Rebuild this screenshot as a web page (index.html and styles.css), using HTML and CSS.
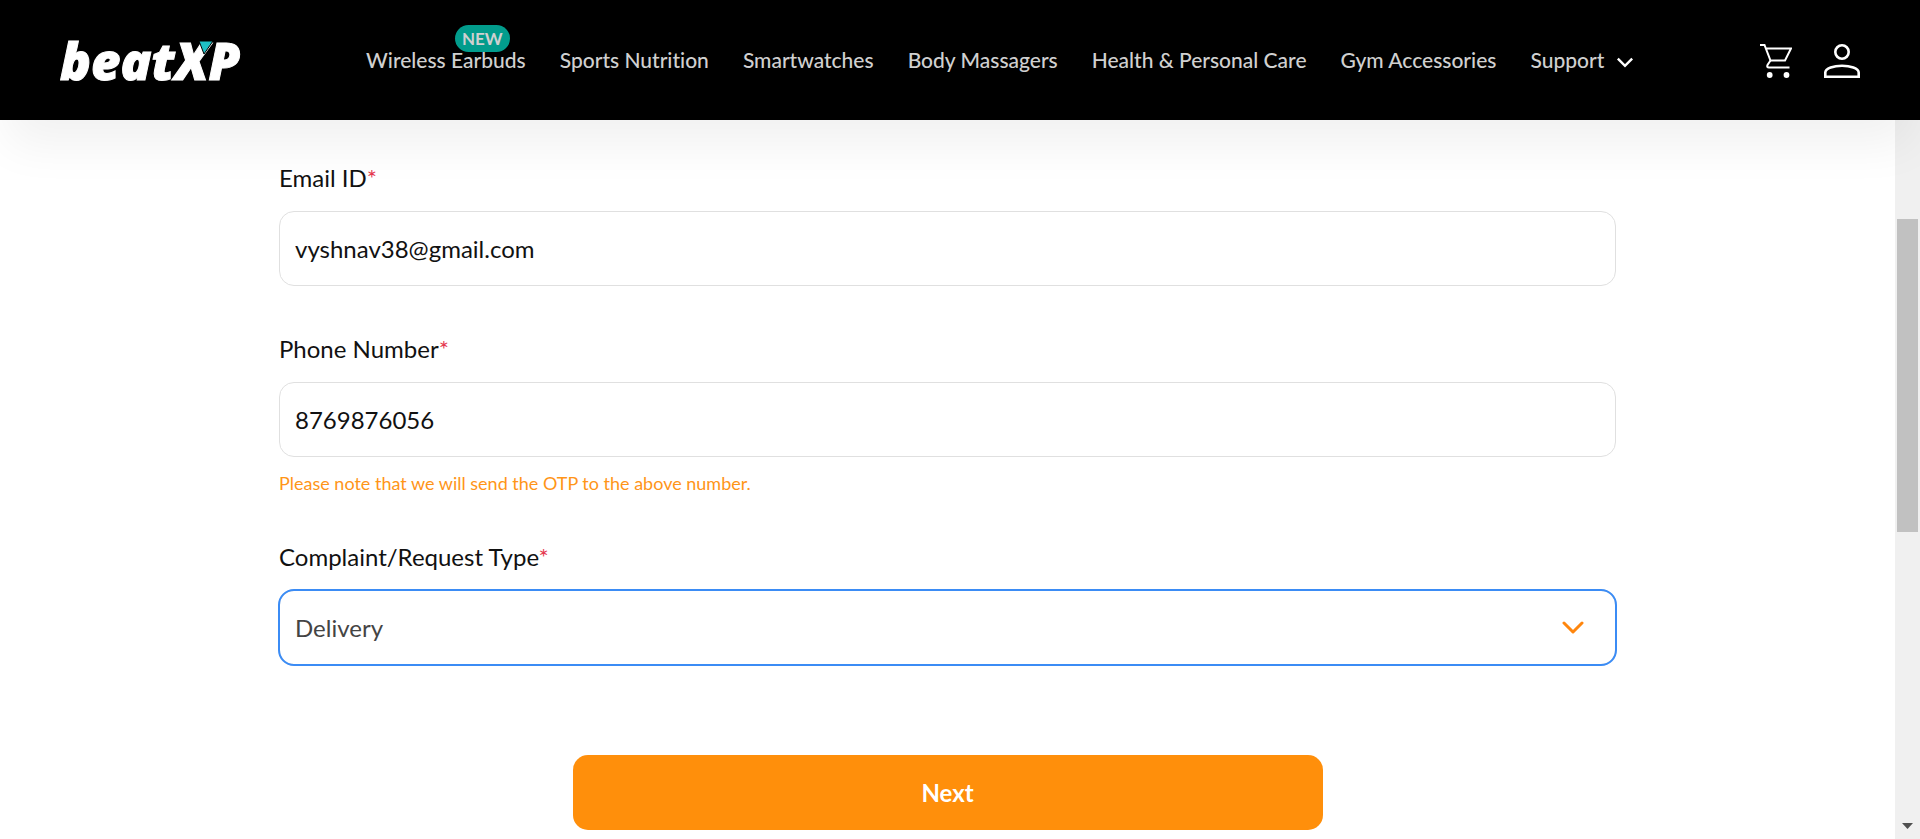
FILE: index.html
```html
<!DOCTYPE html>
<html lang="en">
<head>
<meta charset="utf-8">
<meta name="viewport" content="width=device-width, initial-scale=1">
<title>beatXP Support</title>
<link rel="stylesheet" href="styles.css">
</head>
<body>
<header class="header">
  <a class="logo" href="#" aria-label="beatXP">beatXP<svg class="logo-mark" viewBox="0 0 16 14" aria-hidden="true"><path d="M1 0H15L6 13Z" fill="#1fc0c5" stroke="#000" stroke-width="1"/></svg></a>
  <nav class="nav">
    <a class="nav-link" href="#">Wireless Earbuds<span class="badge">NEW</span></a>
    <a class="nav-link" href="#">Sports Nutrition</a>
    <a class="nav-link" href="#">Smartwatches</a>
    <a class="nav-link" href="#">Body Massagers</a>
    <a class="nav-link" href="#">Health &amp; Personal Care</a>
    <a class="nav-link" href="#">Gym Accessories</a>
    <a class="nav-link" href="#">Support<svg class="nav-chevron" viewBox="0 0 16 10" aria-hidden="true"><path d="M1.500 1.500L8 8L14.500 1.500" fill="none" stroke="#fff" stroke-width="2.200"/></svg></a>
  </nav>
  <div class="actions">
    <a class="action" href="#" aria-label="Cart"><svg class="cart" viewBox="0 0 32 34" aria-hidden="true"><g fill="none" stroke="#fff" stroke-width="2"><path d="M0 1H4.500L10.500 16.500H25L31 4.500H6"/><path d="M10.500 16.500L7.500 21Q6.500 23.500 9 23.500H29.500"/></g><circle cx="9.700" cy="31" r="2.900" fill="#fff"/><circle cx="26.500" cy="31" r="2.900" fill="#fff"/></svg></a>
    <a class="action" href="#" aria-label="Account"><svg class="user" viewBox="0 0 36 34" aria-hidden="true"><g fill="none" stroke="#fff" stroke-width="2.600"><circle cx="18" cy="8" r="6.700"/><path d="M1.300 32.700V28.500C1.300 24 10 21.700 18 21.700S34.700 24 34.700 28.500V32.700Z"/></g></svg></a>
  </div>
</header>
<div class="page">
  <main class="content">
    <form class="form">
      <div class="field">
        <label class="label" for="email">Email ID<span class="required">*</span></label>
        <input class="control" id="email" type="email" value="vyshnav38@gmail.com">
      </div>
      <div class="field">
        <label class="label" for="phone">Phone Number<span class="required">*</span></label>
        <input class="control" id="phone" type="tel" value="8769876056">
        <p class="note">Please note that we will send the OTP to the above number.</p>
      </div>
      <div class="field">
        <label class="label" for="type">Complaint/Request Type<span class="required">*</span></label>
        <div class="select-wrap">
          <select class="control select" id="type"><option>Delivery</option></select>
          <svg class="select-chevron" viewBox="0 0 22 13" aria-hidden="true"><path d="M2 2L11 11L20 2" fill="none" stroke="#ff860d" stroke-width="3" stroke-linecap="round" stroke-linejoin="round"/></svg>
        </div>
      </div>
      <button class="next" type="button">Next</button>
    </form>
  </main>
  <div class="scrollbar" aria-hidden="true">
    <div class="thumb"></div>
    <svg class="arrow" viewBox="0 0 11 6"><path d="M0 0H11L5.500 6Z" fill="#505050"/></svg>
  </div>
</div>
</body>
</html>
```
FILE: styles.css
```css
* { box-sizing: border-box; }
body {
  margin: 0;
  min-height: 100vh;
  display: flex;
  flex-direction: column;
  background: #fff;
  color: #111;
  font-family: Lato, "Open Sans", sans-serif;
}
.header {
  position: relative;
  z-index: 1;
  display: flex;
  align-items: center;
  justify-content: space-between;
  height: 120px;
  padding: 0 60px;
  background: #000;
  box-shadow: 0 32px 48px -8px rgba(0, 0, 0, 0.06);
}
.logo {
  position: relative;
  color: #fff;
  font: italic 800 51px/56px "Open Sans", sans-serif;
  text-decoration: none;
  -webkit-text-stroke: 1px #fff;
}
.logo-mark {
  position: absolute;
  top: 9px;
  left: 138px;
  width: 16px;
  height: 14px;
}
.nav { display: flex; gap: 34px; }
.nav-link {
  position: relative;
  display: flex;
  align-items: center;
  color: #d0d0d0;
  font-size: 21px;
  font-weight: 500;
  font-variant-ligatures: none;
  line-height: 26px;
  text-decoration: none;
  white-space: nowrap;
}
.badge {
  position: absolute;
  top: -22px;
  right: 16px;
  padding: 0 7px;
  border-radius: 14px;
  background: #029c8c;
  font-size: 17px;
  font-weight: 700;
  line-height: 27px;
  z-index: -1;
}
.nav-chevron { width: 18px; height: 11px; margin: 4px 0 0 12px; }
.actions { display: flex; align-items: center; gap: 32px; padding-top: 2px; }
.action { display: flex; }
.cart { width: 32px; height: 34px; }
.user { width: 36px; height: 34px; }
.page { flex: 1; display: flex; }
.content { flex: 1; padding: 43px 24px 9px; }
.form {
  display: flex;
  flex-direction: column;
  gap: 48px;
  max-width: 1337px;
  margin: 0 auto;
}
.field { display: flex; flex-direction: column; }
.label { margin-bottom: 18px; font-size: 24px; line-height: 30px; }
.required { color: #e53950; }
.control {
  width: 100%;
  height: 75px;
  padding: 0 15px;
  border: 1px solid #e0e0e0;
  border-radius: 15px;
  background: #fff;
  color: #111;
  font: 24px/30px Lato, "Open Sans", sans-serif;
}
.note { margin: 16px 0 0; color: #ff9518; font-size: 18px; line-height: 21px; }
.select-wrap { position: relative; }
.select {
  display: block;
  appearance: none;
  color: #444;
  outline: 2px solid #3b8cf5;
  outline-offset: -1px;
}
.select-chevron {
  position: absolute;
  top: 31px;
  right: 32px;
  width: 22px;
  height: 13px;
  pointer-events: none;
}
.next {
  align-self: center;
  width: 100%;
  max-width: 750px;
  height: 75px;
  margin-top: 42px;
  border: 0;
  border-radius: 15px;
  background: #ff8f0b;
  color: #fff;
  font: 700 24px/30px Lato, "Open Sans", sans-serif;
}
.scrollbar {
  display: flex;
  flex-direction: column;
  align-items: center;
  justify-content: space-between;
  width: 25px;
  padding: 99px 2px 10px;
  background: #f0f0f0;
}
.thumb { width: 100%; height: 313px; background: #c1c1c1; }
.arrow { width: 11px; height: 6px; }
```
